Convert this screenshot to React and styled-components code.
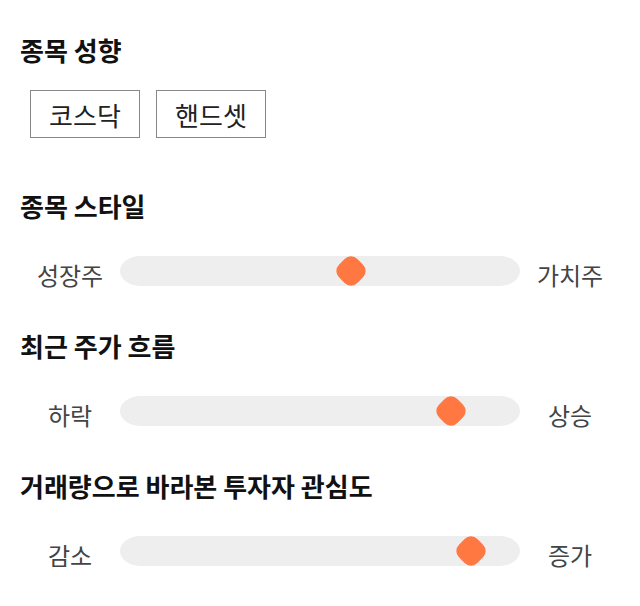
import React from "react";
import styled, { createGlobalStyle } from "styled-components";

const GlobalStyle = createGlobalStyle`
  body {
    margin: 0;
    background: #fff;
    font-family: "Noto Sans CJK KR", "Noto Sans", sans-serif;
  }
`;

const Page = styled.div`
  padding: 35px 20px 0;
  box-sizing: border-box;
  width: 640px;
`;

const Section = styled.section`
  margin-bottom: ${(p) => p.$gap || 0}px;
`;

const Title = styled.h2`
  margin: 0;
  font-size: 26px;
  line-height: 29px;
  font-weight: 700;
  color: #111;
`;

const ButtonRow = styled.div`
  display: flex;
  gap: 16px;
  padding: 26px 0 0 10px;
`;

const ChoiceButton = styled.button`
  width: 110px;
  height: 48px;
  box-sizing: border-box;
  border: 1px solid #888;
  background: #fff;
  font-family: inherit;
  font-size: 26px;
  line-height: 1;
  color: #222;
  padding: 2px 0 0;
  cursor: pointer;
`;

const SliderRow = styled.div`
  display: flex;
  align-items: center;
  margin-top: 32px;
`;

const EndLabel = styled.span`
  width: 100px;
  flex-shrink: 0;
  text-align: center;
  font-size: 24px;
  line-height: 30px;
  padding-top: 8px;
  color: #444;
`;

const Track = styled.div`
  position: relative;
  flex: 1;
  height: 30px;
  background: #eeeeee;
  border-radius: 20px / 15px;
`;

const Thumb = styled.div`
  position: absolute;
  top: 2px;
  width: 26px;
  height: 26px;
  margin-left: -13px;
  background: #ff7741;
  border-radius: 9px;
  transform: rotate(45deg);
`;

const sliders = [
  { title: "종목 스타일", left: "성장주", right: "가치주", value: 0.584 },
  { title: "최근 주가 흐름", left: "하락", right: "상승", value: 0.854 },
  { title: "거래량으로 바라본 투자자 관심도", left: "감소", right: "증가", value: 0.907 },
];

const Slider = ({ left, right, value }) => (
  <SliderRow>
    <EndLabel>{left}</EndLabel>
    <Track>
      <Thumb style={{ left: `calc(15px + (100% - 30px) * ${value})` }} />
    </Track>
    <EndLabel>{right}</EndLabel>
  </SliderRow>
);

export default function App() {
  return (
    <>
      <GlobalStyle />
      <Page>
        <Section $gap={53}>
          <Title>종목 성향</Title>
          <ButtonRow>
            <ChoiceButton>코스닥</ChoiceButton>
            <ChoiceButton>핸드셋</ChoiceButton>
          </ButtonRow>
        </Section>
        {sliders.map((s) => (
          <Section key={s.title} $gap={41}>
            <Title>{s.title}</Title>
            <Slider left={s.left} right={s.right} value={s.value} />
          </Section>
        ))}
      </Page>
    </>
  );
}
